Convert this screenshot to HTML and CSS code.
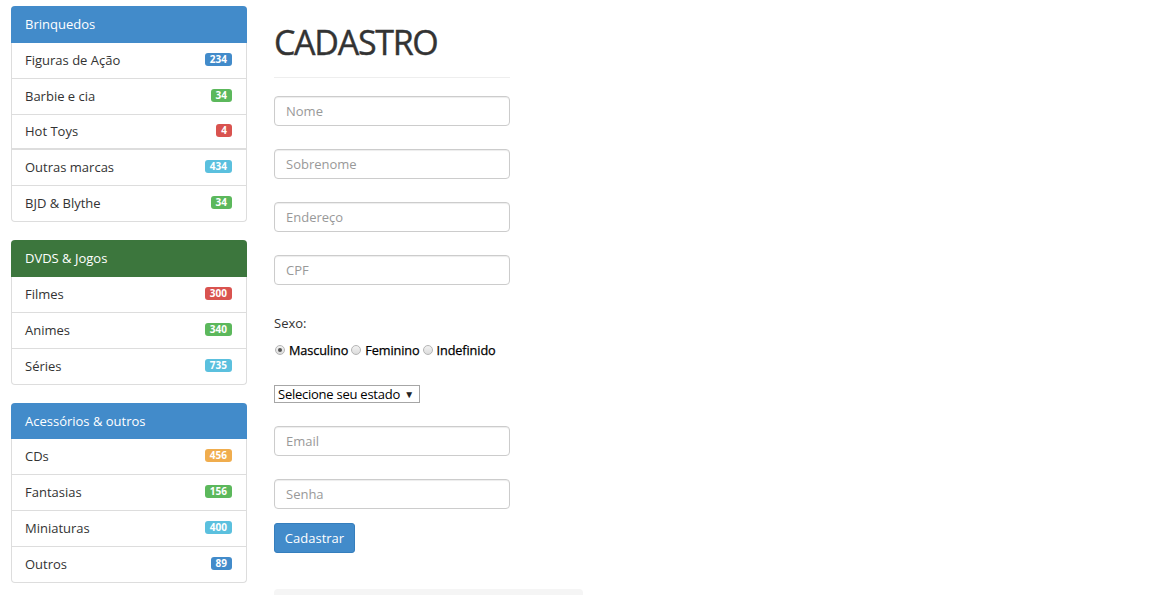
FILE: index.html
```html
<!DOCTYPE html>
<html lang="pt-BR">
<head>
<meta charset="utf-8">
<title>Cadastro</title>
<link rel="stylesheet" href="styles.css">
</head>
<body>
<div class="page">
  <aside class="sidebar">
    <div class="panel">
      <div class="panel-heading primary">Brinquedos</div>
      <ul class="list">
        <li class="item">Figuras de Ação <span class="badge b-blue">234</span></li>
        <li class="item">Barbie e cia <span class="badge b-green">34</span></li>
        <li class="item thick">Hot Toys <span class="badge b-red">4</span></li>
        <li class="item">Outras marcas <span class="badge b-info">434</span></li>
        <li class="item">BJD &amp; Blythe <span class="badge b-green">34</span></li>
      </ul>
    </div>
    <div class="panel">
      <div class="panel-heading success">DVDS &amp; Jogos</div>
      <ul class="list">
        <li class="item">Filmes <span class="badge b-red">300</span></li>
        <li class="item">Animes <span class="badge b-green">340</span></li>
        <li class="item">Séries <span class="badge b-info">735</span></li>
      </ul>
    </div>
    <div class="panel">
      <div class="panel-heading primary short">Acessórios &amp; outros</div>
      <ul class="list">
        <li class="item">CDs <span class="badge b-orange">456</span></li>
        <li class="item">Fantasias <span class="badge b-green">156</span></li>
        <li class="item">Miniaturas <span class="badge b-info">400</span></li>
        <li class="item">Outros <span class="badge b-blue">89</span></li>
      </ul>
    </div>
  </aside>
  <main class="main">
    <form class="form">
      <h1 class="title">CADASTRO</h1>
      <hr class="rule">
      <input class="field" type="text" placeholder="Nome">
      <input class="field" type="text" placeholder="Sobrenome">
      <input class="field" type="text" placeholder="Endereço">
      <input class="field" type="text" placeholder="CPF">
      <div class="sexo">
        <div class="sexo-label">Sexo:</div>
        <div class="radios">
          <label class="radio"><span class="dot checked"></span>Masculino</label>
          <label class="radio"><span class="dot"></span>Feminino</label>
          <label class="radio"><span class="dot"></span>Indefinido</label>
        </div>
      </div>
      <div class="select">Selecione seu estado <span class="arrow">▼</span></div>
      <input class="field" type="email" placeholder="Email">
      <input class="field" type="password" placeholder="Senha">
      <button class="btn" type="button">Cadastrar</button>
    </form>
    <div class="footer-box"></div>
  </main>
</div>
</body>
</html>
```
FILE: styles.css
```css
html, body {
  margin: 0;
  padding: 0;
  background: #fff;
  overflow: hidden;
}
body {
  font-family: "Open Sans", "Liberation Sans", sans-serif;
  font-size: 13px;
  color: #333;
}
.page {
  display: flex;
  align-items: flex-start;
  gap: 27px;
  padding: 6px 0 0 11px;
}
.sidebar {
  width: 236px;
  flex: none;
}
.panel {
  border: 1px solid #ddd;
  border-top: none;
  border-radius: 4px;
  margin-bottom: 18px;
  background: #fff;
}
.panel-heading {
  height: 37px;
  line-height: 36px;
  padding: 0 14px;
  margin: 0 -1px;
  color: #fff;
  font-size: 13px;
  border-radius: 4px 4px 0 0;
}
.panel-heading.short {
  height: 36px;
  line-height: 36px;
}
.primary { background: #428bca; }
.success { background: #3c763d; }
.list {
  list-style: none;
  margin: 0;
  padding: 0;
}
.item {
  box-sizing: border-box;
  display: flex;
  align-items: center;
  justify-content: space-between;
  height: 36px;
  padding: 0 14px 2px 13px;
  border-bottom: 1px solid #ddd;
}
.item.thick {
  height: 35px;
  border-bottom-width: 2px;
}
.item:last-child {
  border-bottom: none;
  height: 35px;
}
.badge {
  display: inline-block;
  padding: 0 5px;
  height: 13px;
  line-height: 13px;
  font-size: 10px;
  font-weight: 700;
  color: #fff;
  text-align: center;
  border-radius: 3px;
}
.b-blue { background: #428bca; }
.b-green { background: #5cb85c; }
.b-red { background: #d9534f; }
.b-info { background: #5bc0de; }
.b-orange { background: #f0ad4e; }

.main {
  flex: none;
  width: 309px;
}
.form {
  width: 236px;
  display: flex;
  flex-direction: column;
  align-items: flex-start;
}
.title {
  margin: 16px 0 0;
  font-size: 34px;
  line-height: 40px;
  font-weight: 500;
  color: #333;
  letter-spacing: -1.3px;
  -webkit-text-stroke: 0.4px #333;
}
.rule {
  width: 100%;
  margin: 15px 0 18px;
  border: 0;
  border-top: 1px solid #eee;
}
.field {
  box-sizing: border-box;
  width: 236px;
  height: 30px;
  margin: 0 0 23px;
  padding: 0 11px;
  border: 1px solid #ccc;
  border-radius: 4px;
  box-shadow: inset 0 1px 1px rgba(0,0,0,0.075);
  font-family: inherit;
  font-size: 13px;
  color: #555;
  background: #fff;
}
.field::placeholder {
  color: #999;
}
.sexo {
  margin: 6px 0 0;
}
.sexo-label {
  line-height: 18px;
}
.radios {
  display: flex;
  margin-top: 9px;
  line-height: 18px;
}
.radio {
  display: flex;
  align-items: center;
  color: #000;
  font-size: 12.7px;
  font-weight: 400;
  letter-spacing: -0.1px;
  -webkit-text-stroke: 0.25px #000;
}
.dot {
  box-sizing: border-box;
  width: 10px;
  height: 10px;
  margin: 0 4px 0 3px;
  border-radius: 50%;
  border: 1px solid #b5b5b5;
  background: linear-gradient(#f2f2f2, #dcdcdc);
  position: relative;
}
.radio:first-child .dot {
  margin-left: 1px;
}
.dot.checked::after {
  content: "";
  position: absolute;
  left: 2px;
  top: 2px;
  width: 4px;
  height: 4px;
  border-radius: 50%;
  background: #555;
}
.select {
  box-sizing: border-box;
  margin: 26px 0 0;
  width: 146px;
  height: 18px;
  line-height: 16px;
  padding: 0 3px;
  border: 1px solid #a6a6a6;
  color: #000;
  font-size: 13px;
  letter-spacing: -0.25px;
  display: flex;
  justify-content: space-between;
  align-items: center;
  background: #fff;
}
.arrow {
  font-size: 10px;
  color: #222;
  padding-right: 2px;
}
.select + .field {
  margin-top: 23px;
}
.field:last-of-type {
  margin-bottom: 14px;
}
.btn {
  height: 30px;
  width: 81px;
  padding: 0;
  border: 1px solid #357ebd;
  border-radius: 3px;
  background: #428bca;
  color: #fff;
  font-family: inherit;
  font-size: 13px;
}
.footer-box {
  margin-top: 36px;
  width: 309px;
  height: 20px;
  background: #f5f5f5;
  border-radius: 4px;
}
```
